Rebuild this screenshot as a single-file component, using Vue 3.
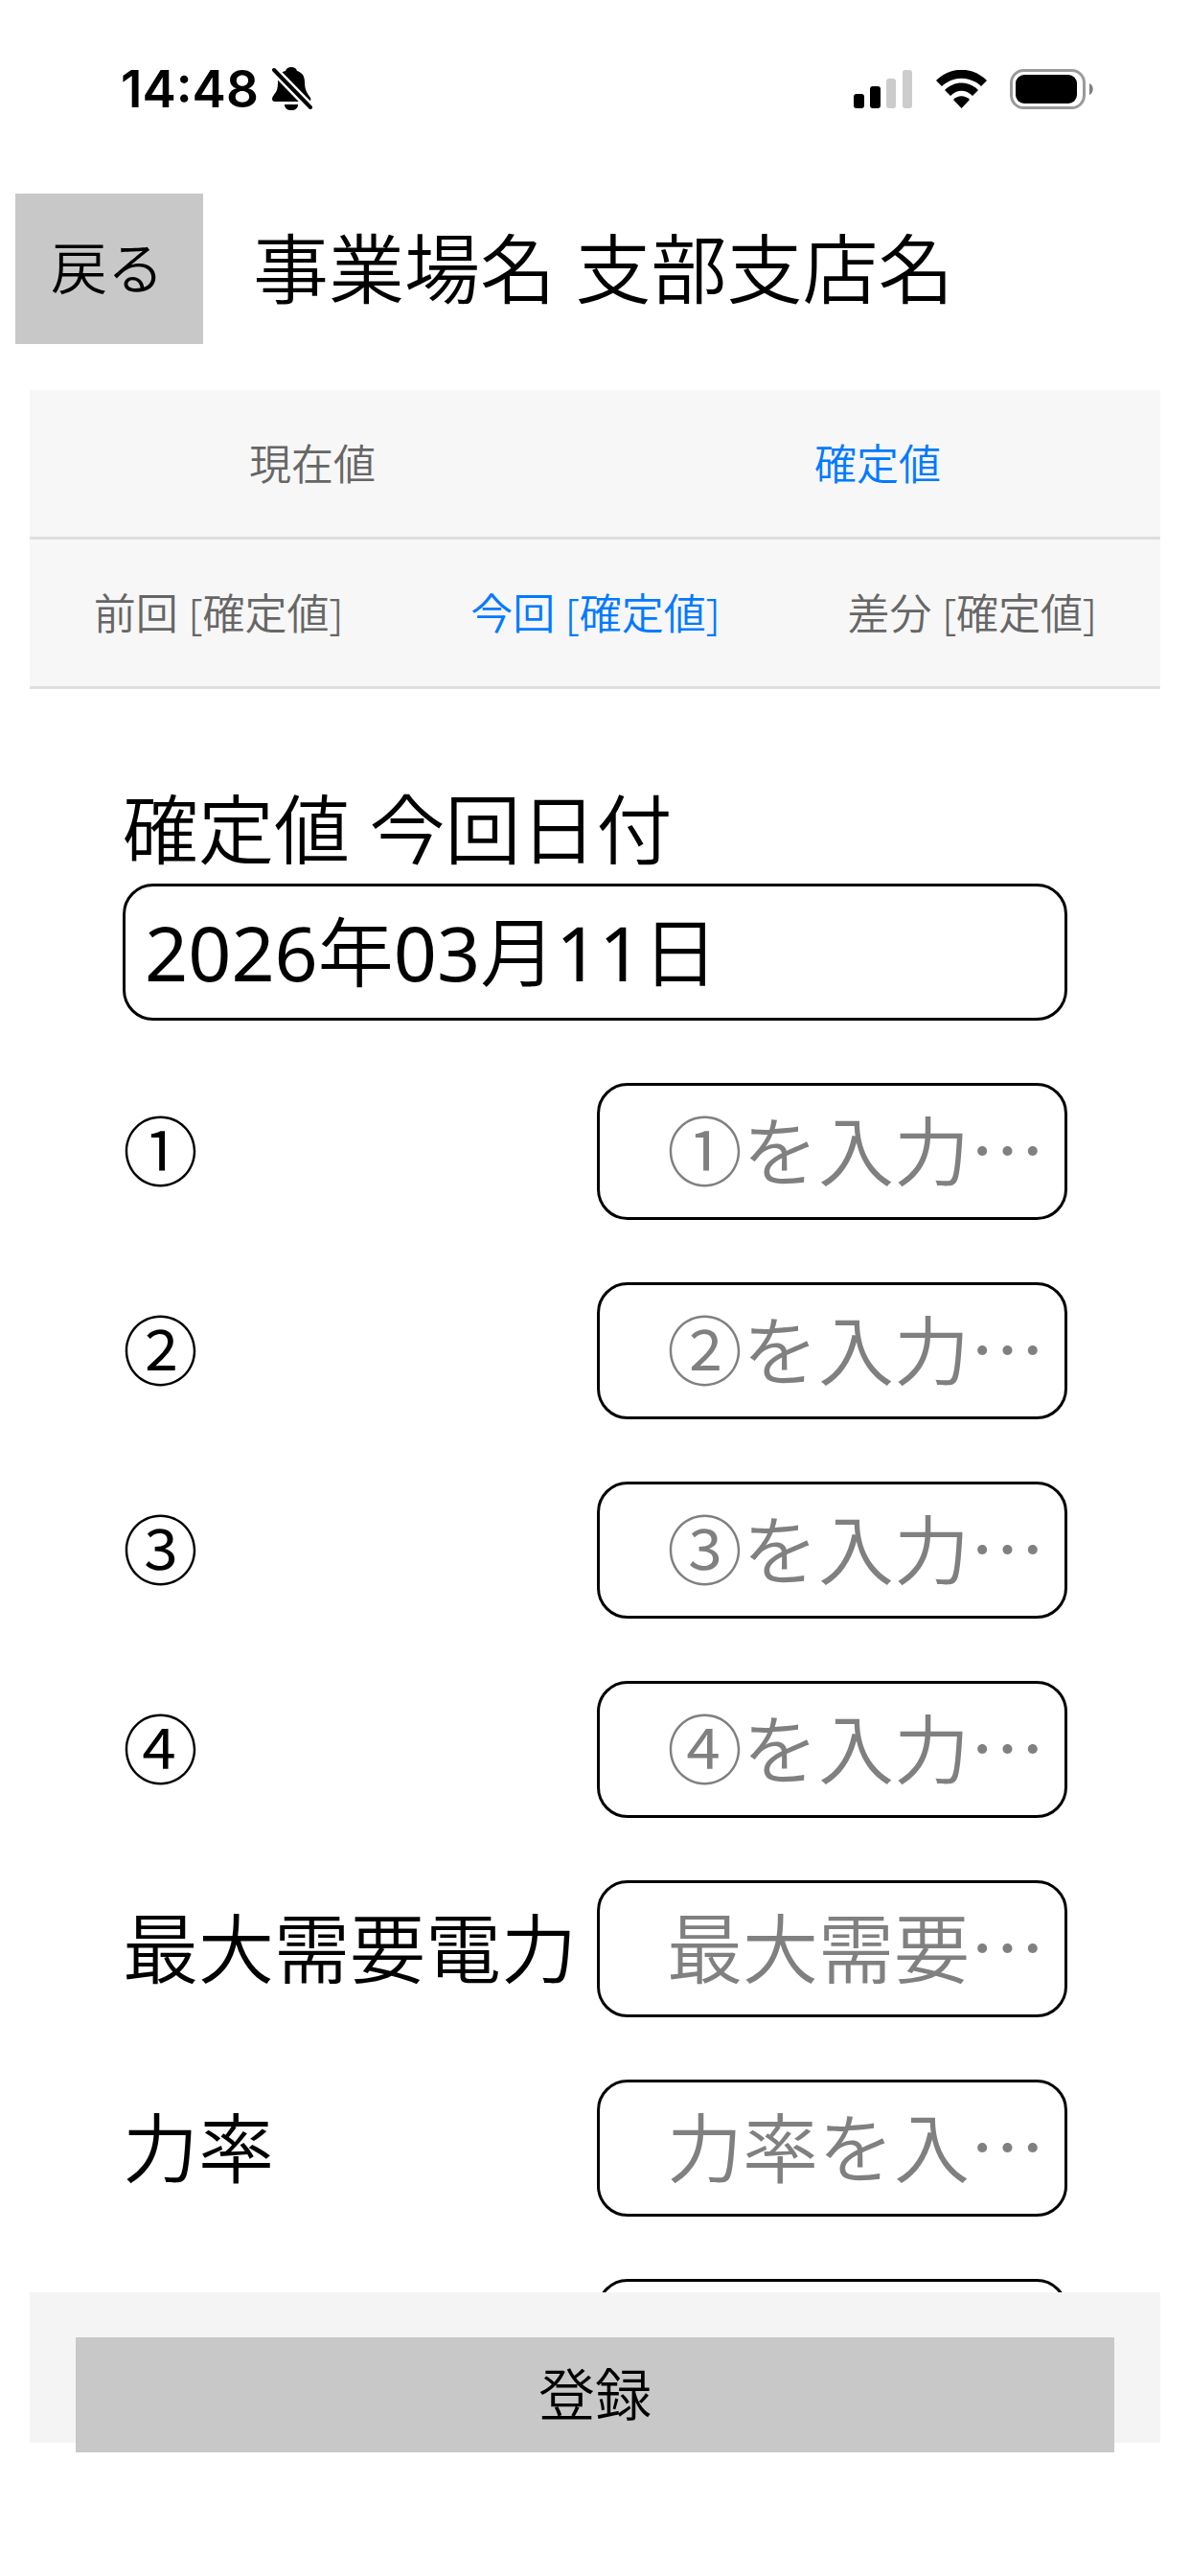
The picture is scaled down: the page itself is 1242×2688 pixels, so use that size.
<template>
  <div class="app-container">
    <!-- ステータスバー -->
    <div class="status-bar">
      <div class="status-left">
        <span class="clock">14:48</span>
        <svg class="bell" width="42" height="46" viewBox="0 0 42 46" aria-hidden="true">
          <path d="M0 33 C0 31 2 29 4 26 C6 23 6 18 6 13 C7 8 9 5 14 4 C15 1 17 0 20 0 C23 0 25 1 26 4 C32 6 34 10 34 16 C34 25 38 29 40 32 C41 34 40 36 38 36 L3 36 C1 36 0 35 0 33 Z" />
          <path d="M13 39 H27 C27 43 24 45 20 45 C16 45 13 43 13 39 Z" />
          <path d="M2 3 L40 42" stroke="#fff" stroke-width="9" />
          <path d="M2 3 L40 42" stroke="#000" stroke-width="4" stroke-linecap="round" />
        </svg>
      </div>
      <div class="status-right">
        <svg width="62" height="40" viewBox="0 0 62 40" aria-hidden="true">
          <rect x="0" y="25" width="11" height="15" rx="3" />
          <rect x="17" y="17" width="11" height="23" rx="3" />
          <rect x="34" y="9" width="10" height="31" rx="3" fill="#ccc" />
          <rect x="51" y="0" width="10" height="40" rx="3" fill="#ccc" />
        </svg>
        <svg width="53" height="40" viewBox="0 0 53 40" aria-hidden="true">
          <path d="M0 11 C15 -4 38 -4 53 11 L47 17 C35 6 18 6 6 17 Z" />
          <path d="M9 21 C19 11 34 11 44 21 L38 27 C31 20 22 20 15 27 Z" />
          <path d="M18 31 C23 26 30 26 35 31 L26.500 40 Z" />
        </svg>
        <svg width="87" height="42" viewBox="0 0 87 42" aria-hidden="true">
          <rect x="1.500" y="1.500" width="76" height="39" rx="13" fill="none" stroke="#9a9a9a" stroke-width="3" />
          <rect x="6" y="6" width="64" height="30" rx="9" />
          <path d="M83 15 C88 17 88 25 83 27 Z" fill="#808080" />
        </svg>
      </div>
    </div>

    <!-- ヘッダー -->
    <header class="page-header">
      <button type="button" class="back-button">戻る</button>
      <h1 class="page-title">事業場名 支部支店名</h1>
    </header>

    <!-- タブ -->
    <nav class="tabs">
      <div class="tab-row">
        <button
          v-for="tab in valueTabs"
          :key="tab"
          type="button"
          class="tab"
          :class="{ active: tab === currentValue }"
          @click="currentValue = tab"
        >{{ tab }}</button>
      </div>
      <div class="tab-row">
        <button
          v-for="tab in periodTabs"
          :key="tab"
          type="button"
          class="tab"
          :class="{ active: tab === currentPeriod }"
          @click="currentPeriod = tab"
        >{{ tab }}</button>
      </div>
    </nav>

    <!-- 入力フォーム -->
    <main class="form-area">
      <div class="date-field">
        <label for="date" class="label">確定値 今回日付</label>
        <input id="date" v-model="date" type="text" class="text-box date-box" />
      </div>
      <div v-for="(field, index) in fields" :key="index" class="field-row">
        <label :for="'field' + index" class="label">{{ field.label }}</label>
        <input
          :id="'field' + index"
          v-model="field.value"
          type="text"
          class="text-box"
          :placeholder="field.placeholder"
        />
      </div>
    </main>

    <!-- 登録ボタン -->
    <footer class="page-footer">
      <button type="button" class="submit-button">登録</button>
    </footer>
  </div>
</template>

<script setup>
import { ref } from 'vue'

const valueTabs = ['現在値', '確定値']
const periodTabs = ['前回 [確定値]', '今回 [確定値]', '差分 [確定値]']

const currentValue = ref('確定値')
const currentPeriod = ref('今回 [確定値]')

const date = ref('2026年03月11日')

const fields = ref([
  { label: '①', placeholder: '①を入力…', value: '' },
  { label: '②', placeholder: '②を入力…', value: '' },
  { label: '③', placeholder: '③を入力…', value: '' },
  { label: '④', placeholder: '④を入力…', value: '' },
  { label: '最大需要電力', placeholder: '最大需要…', value: '' },
  { label: '力率', placeholder: '力率を入…', value: '' },
  { label: '', placeholder: '', value: '' }
])
</script>

<style>
body {
  margin: 0;
  background: #fff;
}
</style>

<style scoped>
* {
  box-sizing: border-box;
}

.app-container {
  display: flex;
  flex-direction: column;
  height: 100vh;
  padding-bottom: 139px;
  overflow: hidden;
  color: #000;
  font-family: 'Noto Sans', 'Noto Sans CJK JP DemiLight', 'Noto Sans CJK JP', sans-serif;
  font-weight: 350;
}

button,
input {
  margin: 0;
  border: none;
  border-radius: 0;
  color: inherit;
  font-family: inherit;
  font-weight: inherit;
}

/* ステータスバー */
.status-bar {
  display: flex;
  flex-shrink: 0;
  align-items: center;
  justify-content: space-between;
  height: 186px;
  padding: 0 101px 0 126px;
}

.status-left,
.status-right {
  display: flex;
  align-items: center;
}

.status-left {
  gap: 14px;
}

.status-right {
  gap: 24px;
}

.clock {
  font-family: Inter, sans-serif;
  font-size: 53px;
  font-weight: 600;
  line-height: 64px;
}

/* ヘッダー */
.page-header {
  display: flex;
  flex-shrink: 0;
  align-items: center;
  gap: 52px;
  padding: 16px 16px 48px;
}

.back-button {
  width: 196px;
  height: 157px;
  padding: 0 4px 8px 0;
  background: #c8c8c8;
  font-size: 59px;
}

.page-title {
  margin: 0;
  font-size: 79px;
  font-weight: inherit;
  line-height: 112px;
}

/* タブ */
.tabs {
  flex-shrink: 0;
  margin: 0 31px;
}

.tab-row {
  display: flex;
  height: 156px;
  border-bottom: 3px solid #dedede;
  background: #f7f7f7;
}

.tab {
  flex: 1;
  padding: 0 0 4px;
  background: none;
  color: #666;
  font-size: 44px;
}

.tab.active {
  color: #007aff;
}

/* 入力フォーム */
.form-area {
  flex: 1;
  min-height: 0;
  padding: 91px 128px 0;
  overflow: hidden;
}

.label {
  display: block;
  font-size: 79px;
  line-height: 112px;
  white-space: nowrap;
}

.text-box {
  width: 100%;
  height: 143px;
  padding: 0 0 0 70px;
  border: 3px solid #000;
  border-radius: 32px;
  background: #fff;
  font-size: 79px;
}

.text-box::placeholder {
  color: #808080;
  font-family: 'Noto Sans CJK JP DemiLight', 'Noto Sans CJK JP', sans-serif;
  opacity: 1;
}

.date-box {
  padding: 0 20px 8px;
  font-weight: 400;
}

.field-row {
  display: grid;
  grid-template-columns: 1fr 1fr;
  gap: 4px;
  align-items: center;
  margin-top: 65px;
}

/* 登録ボタン */
.page-footer {
  flex-shrink: 0;
  height: 157px;
  margin: 0 31px;
  padding: 47px 48px 0;
  background: #f4f4f4;
}

.submit-button {
  width: 100%;
  height: 120px;
  padding: 0 0 8px;
  background: #c8c8c8;
  font-size: 59px;
}
</style>
